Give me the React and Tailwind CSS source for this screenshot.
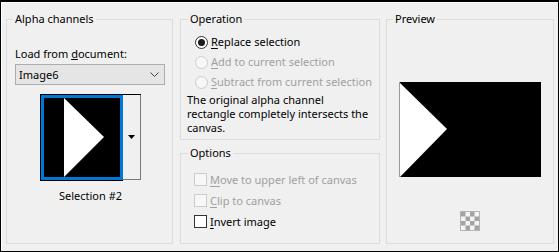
const Radio = ({ checked, disabled }) => (
  <span
    className={`w-[13px] h-[13px] rounded-full border flex items-center justify-center shrink-0 ${
      disabled ? "border-[#cccccc] bg-[#f7f7f7]" : "border-[#333333] bg-white"
    }`}
  >
    {checked && <span className="w-[7px] h-[7px] rounded-full bg-[#1a1a1a]" />}
  </span>
);

const Check = ({ disabled }) => (
  <span
    className={`w-[13px] h-[13px] border shrink-0 ${
      disabled ? "border-[#cccccc] bg-[#f7f7f7]" : "border-[#333333] bg-white"
    }`}
  />
);

const Label = ({ keyChar, rest, disabled }) => (
  <span className={`whitespace-nowrap ${disabled ? "text-[#a0a0a0]" : "text-black"}`}>
    <u className="underline-offset-[2px]">{keyChar}</u>
    {rest}
  </span>
);

const operations = [
  { k: "R", rest: "eplace selection", checked: true, disabled: false },
  { k: "A", rest: "dd to current selection", checked: false, disabled: true },
  { k: "S", rest: "ubtract from current selection", checked: false, disabled: true },
];

const options = [
  { k: "M", rest: "ove to upper left of canvas", disabled: true },
  { k: "C", rest: "lip to canvas", disabled: true },
  { k: "I", rest: "nvert image", disabled: false },
];

const Checker = () => {
  const cells = [];
  for (let r = 0; r < 4; r++) {
    for (let c = 0; c < 4; c++) {
      if ((r + c) % 2 === 0) {
        cells.push(<rect key={`${r}-${c}`} x={1 + c * 4.5} y={1 + r * 4.5} width="4.5" height="4.5" fill="#a3a3a3" />);
      }
    }
  }
  return (
    <svg width="20" height="20" viewBox="0 0 20 20">
      <rect x="0.5" y="0.5" width="19" height="19" fill="#f4f4f4" stroke="#b4b4b4" />
      {cells}
    </svg>
  );
};

export default function App() {
  return (
    <div
      className="w-[559px] h-[252px] border border-t-2 border-black text-[11px] leading-[16px] text-black"
      style={{ fontFamily: '"Noto Sans", "Open Sans", sans-serif' }}
    >
      <div className="h-full border-l border-t border-white bg-[#f0f0f0] flex items-start pl-[4px] pt-[8px]">
        {/* Alpha channels */}
        <fieldset className="w-[167px] h-[233px] border border-[#dcdcdc] p-0 m-0 shrink-0">
          <legend className="ml-[6px] px-[2px] leading-[16px]">Alpha channels</legend>
          <div className="flex flex-col pl-[8px]">
            <div className="mt-[19px]">
              Load from <u>d</u>ocument:
            </div>
            <div className="mt-[2px] w-[150px] h-[21px] border border-[#adadad] bg-[#e5e5e5] flex items-center justify-between pl-[3px] pr-[5px]">
              <span>Image6</span>
              <svg width="9" height="5" viewBox="0 0 9 5">
                <path d="M0.5 0.5 L4.5 4.5 L8.5 0.5" fill="none" stroke="#404040" strokeWidth="1" />
              </svg>
            </div>
            <div className="ml-[25px] mt-[9px] flex flex-col items-center w-[101px]">
              <div className="flex border-t border-l border-black w-[101px]">
                <div className="border-b border-black">
                  <div className="w-[82px] h-[85px] border-[3px] border-[#0078d7] bg-black">
                    <svg width="76" height="79" viewBox="0 0 76 79" className="block">
                      <polygon points="20,0 60,39 20,79" fill="white" />
                    </svg>
                  </div>
                </div>
                <div className="w-[18px] h-[85px] border-r border-b border-[#7a7a7a] bg-[#f0f0f0] flex items-center justify-center">
                  <svg width="7" height="4" viewBox="0 0 7 4">
                    <polygon points="0,0 7,0 3.5,4" fill="black" />
                  </svg>
                </div>
              </div>
              <div className="mt-[7px]">Selection #2</div>
            </div>
          </div>
        </fieldset>

        {/* Operation + Options */}
        <div className="ml-[7px] w-[200px] flex flex-col gap-[5px] shrink-0">
          <fieldset className="h-[129px] border border-[#dcdcdc] p-0 m-0">
            <legend className="ml-[7px] px-[2px] leading-[16px]">Operation</legend>
            <div className="flex flex-col mt-[5px]">
              {operations.map((o) => (
                <div key={o.k} className="h-[20px] flex items-center gap-[3px] pl-[14px]">
                  <Radio checked={o.checked} disabled={o.disabled} />
                  <Label keyChar={o.k} rest={o.rest} disabled={o.disabled} />
                </div>
              ))}
              <p className="mt-[1px] pl-[6px] leading-[14px] whitespace-nowrap">
                The original alpha channel
                <br />
                rectangle completely intersects the
                <br />
                canvas.
              </p>
            </div>
          </fieldset>
          <fieldset className="h-[99px] border border-[#dcdcdc] p-0 m-0">
            <legend className="ml-[7px] px-[2px] leading-[16px]">Options</legend>
            <div className="flex flex-col mt-[8px]">
              {options.map((o) => (
                <div key={o.k} className="h-[21px] flex items-center gap-[3px] pl-[13px]">
                  <Check disabled={o.disabled} />
                  <Label keyChar={o.k} rest={o.rest} disabled={o.disabled} />
                </div>
              ))}
            </div>
          </fieldset>
        </div>

        {/* Preview */}
        <fieldset className="ml-[6px] w-[168px] h-[233px] border border-[#dcdcdc] p-0 m-0 shrink-0">
          <legend className="ml-[6px] px-[2px] leading-[16px]">Preview</legend>
          <div className="flex flex-col items-center">
            <svg width="142" height="95" viewBox="0 0 142 95" className="mt-[55px] block">
              <rect width="142" height="95" fill="black" />
              <polygon points="0,0 48,47 1,95 0,95" fill="white" />
              <line x1="0.5" y1="0" x2="0.5" y2="95" stroke="#9a9a9a" />
            </svg>
            <div className="mt-[34px]">
              <Checker />
            </div>
          </div>
        </fieldset>
      </div>
    </div>
  );
}
